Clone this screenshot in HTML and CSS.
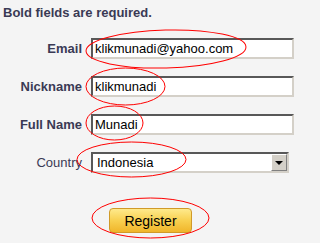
FILE: index.html
```html
<!DOCTYPE html>
<html>
<head>
<meta charset="utf-8">
<link rel="stylesheet" href="styles.css">
</head>
<body>
<form class="reg">
  <p class="note">Bold fields are required.</p>
  <div class="grid">
    <label class="lbl strong">Email</label>
    <div class="field">klikmunadi@yahoo.com</div>
    <label class="lbl strong">Nickname</label>
    <div class="field">klikmunadi</div>
    <label class="lbl strong">Full Name</label>
    <div class="field">Munadi</div>
    <label class="lbl">Country</label>
    <div class="select"><span class="sel-text">Indonesia</span><span class="sel-btn"><span class="tri"></span></span></div>
  </div>
  <div class="actions"><button type="button" class="btn">Register</button></div>
</form>
<svg class="marks" width="302" height="243" viewBox="0 0 302 243">
  <ellipse cx="166" cy="49" rx="80" ry="19" transform="rotate(-1.5 166 49)"/>
  <ellipse cx="125.5" cy="86.5" rx="39.5" ry="18.5"/>
  <ellipse cx="114.5" cy="123" rx="28.5" ry="17"/>
  <ellipse cx="131.5" cy="159.5" rx="54.5" ry="17.5"/>
  <ellipse cx="150.5" cy="218" rx="58.5" ry="20"/>
</svg>
</body>
</html>
```
FILE: styles.css
```css
html, body {
  margin: 0;
  padding: 0;
  background: #f4f4f4;
}
body {
  width: 302px;
  height: 243px;
  overflow: hidden;
  position: relative;
  font-family: "Liberation Sans", Arial, sans-serif;
  font-size: 13px;
  color: #3a3a54;
}
.reg {
  margin: 0;
}
.note {
  margin: 0;
  padding: 5px 0 0 3px;
  line-height: 16px;
  font-weight: bold;
}
.grid {
  margin-top: 17px;
  display: grid;
  grid-template-columns: 82px 203px;
  column-gap: 9px;
  row-gap: 17px;
  align-items: center;
}
.lbl {
  text-align: right;
  white-space: nowrap;
}
.strong {
  font-weight: bold;
}
.field, .select {
  box-sizing: border-box;
  height: 21px;
  background: #fff;
  border-style: solid;
  border-width: 2px;
  border-color: #585858 #d4d0c8 #d4d0c8 #585858;
  color: #000;
  font-size: 13px;
  line-height: 17px;
  padding: 0 2px;
  white-space: nowrap;
  overflow: hidden;
}
.select {
  width: 198px;
  display: flex;
  align-items: center;
  padding: 0 0 0 4px;
}
.sel-text {
  flex: 1;
}
.sel-btn {
  box-sizing: border-box;
  width: 16px;
  height: 17px;
  background: #d4d0c8;
  border-style: solid;
  border-width: 1px;
  border-color: #fff #808080 #808080 #fff;
  display: flex;
  align-items: center;
  justify-content: center;
}
.tri {
  width: 0;
  height: 0;
  border-left: 4px solid transparent;
  border-right: 4px solid transparent;
  border-top: 4px solid #000;
}
.actions {
  margin-top: 35px;
  text-align: center;
}
.btn {
  box-sizing: border-box;
  width: 83px;
  height: 25px;
  margin: 0 0 0 -1px;
  padding: 0;
  border: 1px solid #d09a28;
  border-radius: 4px;
  background: linear-gradient(#feea8c, #f8d050 50%, #f0b52a);
  font-family: "Liberation Sans", Arial, sans-serif;
  font-size: 14px;
  color: #000;
}
.marks {
  position: absolute;
  left: 0;
  top: 0;
  pointer-events: none;
}
.marks ellipse {
  fill: none;
  stroke: #ff0000;
  stroke-width: 1;
}
```
